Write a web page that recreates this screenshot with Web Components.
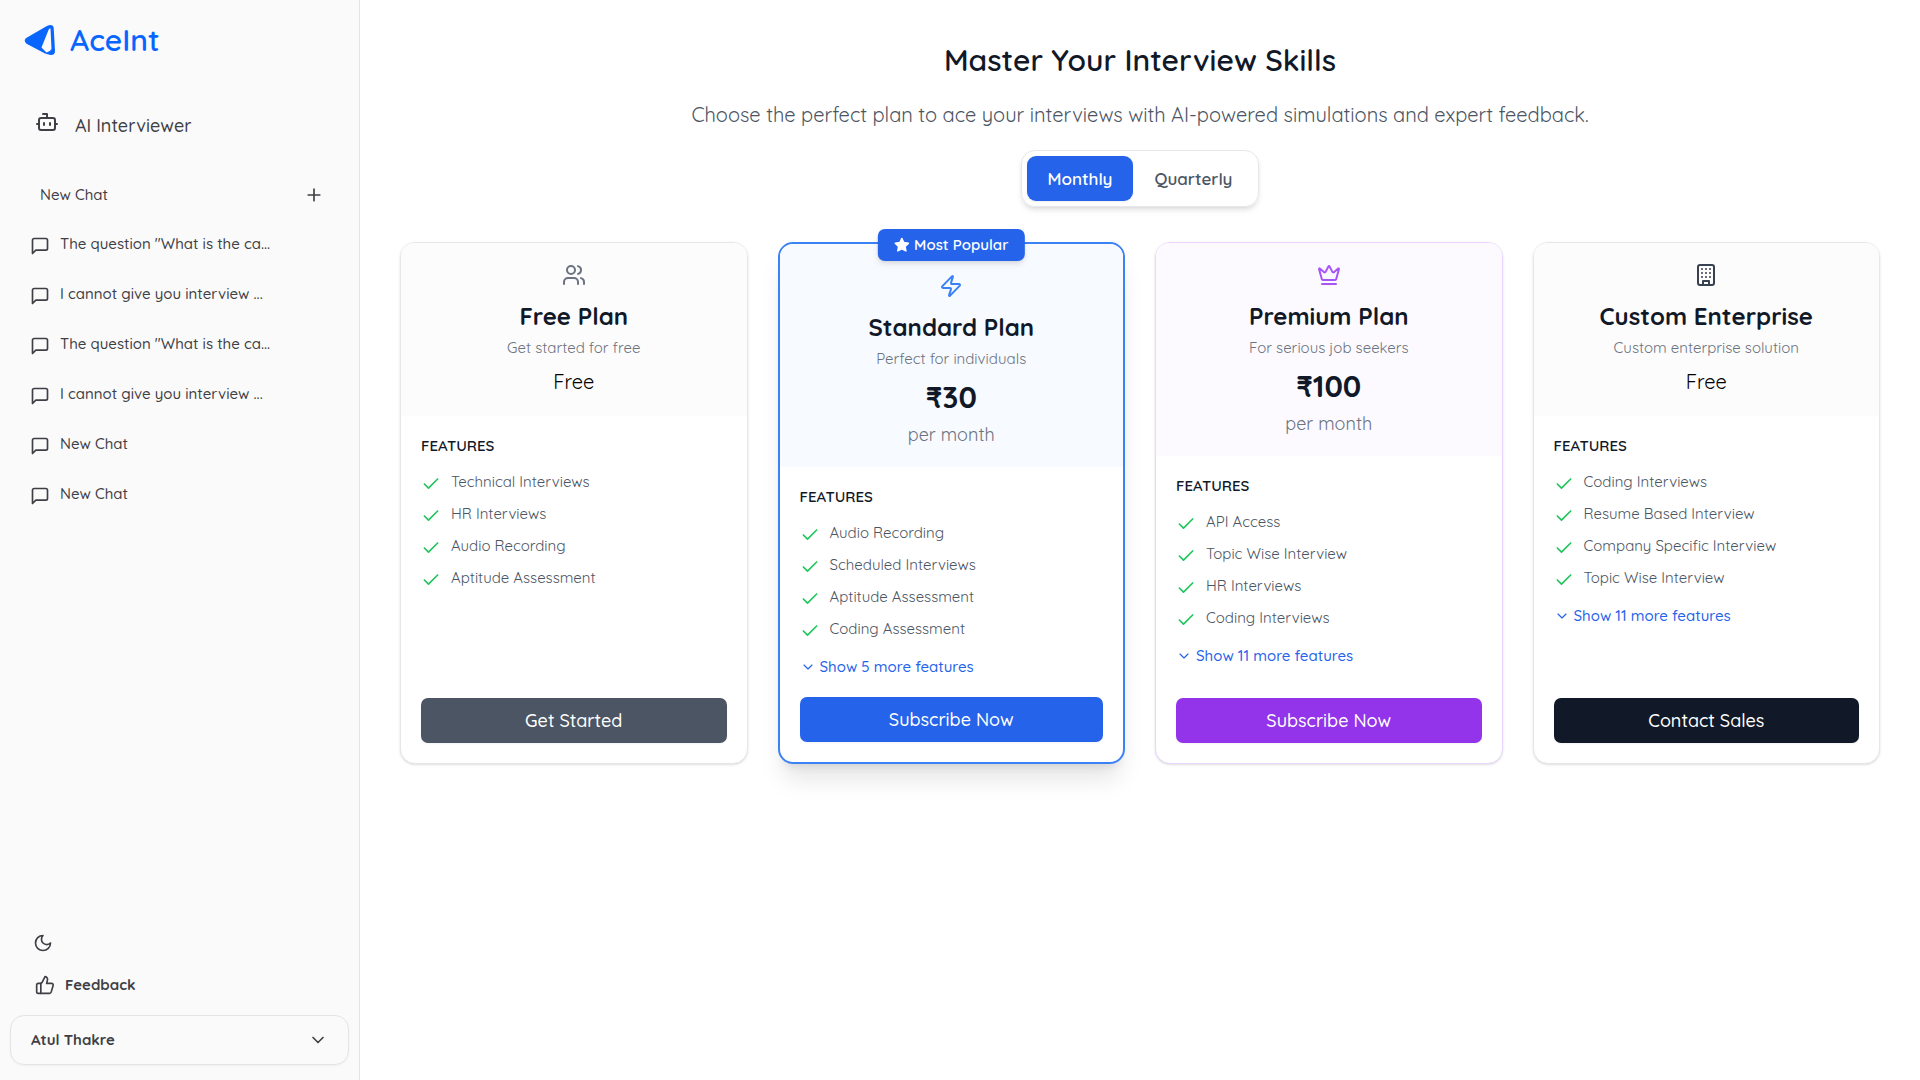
<!DOCTYPE html>
<html lang="en">
<head>
<meta charset="utf-8">
<title>AceInt – Plans</title>
<style>
  *{box-sizing:border-box}
  html,body{margin:0;min-height:100vh}
  body{font-family:Quicksand,Lato,"Open Sans",sans-serif;font-size:16px;color:#111827;background:#fff}
</style>
</head>
<body>
<ace-app>
  <ace-sidebar slot="side">
    <chat-link>The question "What is the ca...</chat-link>
    <chat-link>I cannot give you interview ...</chat-link>
    <chat-link>The question "What is the ca...</chat-link>
    <chat-link>I cannot give you interview ...</chat-link>
    <chat-link>New Chat</chat-link>
    <chat-link>New Chat</chat-link>
  </ace-sidebar>
  <page-intro>
    <span slot="title">Master Your Interview Skills</span>
    <span slot="text">Choose the perfect plan to ace your interviews with AI-powered simulations and expert feedback.</span>
  </page-intro>
  <billing-toggle></billing-toggle>
  <plan-grid>
    <plan-card icon="users" theme="free" name="Free Plan" text="Get started for free" action="Get Started"
      features="Technical Interviews|HR Interviews|Audio Recording|Aptitude Assessment"></plan-card>
    <plan-card icon="zap" theme="standard" popular name="Standard Plan" text="Perfect for individuals" price="₹30" action="Subscribe Now" more="5"
      features="Audio Recording|Scheduled Interviews|Aptitude Assessment|Coding Assessment"></plan-card>
    <plan-card icon="crown" theme="premium" name="Premium Plan" text="For serious job seekers" price="₹100" action="Subscribe Now" more="11"
      features="API Access|Topic Wise Interview|HR Interviews|Coding Interviews"></plan-card>
    <plan-card icon="building" theme="custom" name="Custom Enterprise" text="Custom enterprise solution" action="Contact Sales" more="11"
      features="Coding Interviews|Resume Based Interview|Company Specific Interview|Topic Wise Interview"></plan-card>
  </plan-grid>
</ace-app>
<script>
const BASE = '*{box-sizing:border-box}button{font-family:inherit;border:0;background:none;padding:0;cursor:pointer;color:inherit}h1,h2,h3,p,ul{margin:0;padding:0}a{color:inherit;text-decoration:none}';
const ICONS = {
  bot:'<path d="M12 8V4H8"/><rect width="16" height="12" x="4" y="8" rx="2"/><path d="M2 14h2M20 14h2M15 13v2M9 13v2"/>',
  plus:'<path d="M5 12h14M12 5v14"/>',
  chat:'<path d="M21 15a2 2 0 0 1-2 2H7l-4 4V5a2 2 0 0 1 2-2h14a2 2 0 0 1 2 2z"/>',
  moon:'<path d="M12 3a6 6 0 0 0 9 9 9 9 0 1 1-9-9Z"/>',
  thumb:'<path d="M7 10v12"/><path d="M15 5.88 14 10h5.83a2 2 0 0 1 1.92 2.56l-2.33 8A2 2 0 0 1 17.5 22H4a2 2 0 0 1-2-2v-8a2 2 0 0 1 2-2h2.76a2 2 0 0 0 1.79-1.11L12 2a3.13 3.13 0 0 1 3 3.88Z"/>',
  down:'<path d="m6 9 6 6 6-6"/>',
  check:'<path d="M20 6 9 17l-5-5"/>',
  users:'<path d="M16 21v-2a4 4 0 0 0-4-4H6a4 4 0 0 0-4 4v2"/><circle cx="9" cy="7" r="4"/><path d="M22 21v-2a4 4 0 0 0-3-3.87M16 3.13a4 4 0 0 1 0 7.75"/>',
  zap:'<path d="M4 14a1 1 0 0 1-.78-1.63l9.9-10.2a.5.5 0 0 1 .86.46l-1.92 6.02A1 1 0 0 0 13 10h7a1 1 0 0 1 .78 1.63l-9.9 10.2a.5.5 0 0 1-.86-.46l1.92-6.02A1 1 0 0 0 11 14z"/>',
  crown:'<path d="M11.562 3.266a.5.5 0 0 1 .876 0L15.39 8.87a1 1 0 0 0 1.516.294L21.183 5.5a.5.5 0 0 1 .798.519l-2.834 10.246a1 1 0 0 1-.956.734H5.81a1 1 0 0 1-.957-.734L2.02 6.02a.5.5 0 0 1 .798-.519l4.276 3.664a1 1 0 0 0 1.516-.294z"/><path d="M5 21h14"/>',
  building:'<rect width="16" height="20" x="4" y="2" rx="2"/><path d="M9 22v-4h6v4M8 6h.01M16 6h.01M12 6h.01M12 10h.01M12 14h.01M16 10h.01M16 14h.01M8 10h.01M8 14h.01"/>',
  star:'<path fill="currentColor" d="m12 2 3.09 6.26L22 9.27l-5 4.87 1.18 6.88L12 17.77l-6.18 3.25L7 14.14 2 9.27l6.91-1.01z"/>'
};
class Base extends HTMLElement {
  connectedCallback(){
    if(this.shadowRoot) return;
    this.attachShadow({mode:'open'}).innerHTML = `<style>${BASE}${this.css()}</style>${this.html()}`;
  }
  at(n){ return this.getAttribute(n) || ''; }
}
customElements.define('ui-icon', class extends Base {
  css(){ const s=this.at('size')||20; return `:host{display:inline-flex;flex:none;width:${s}px;height:${s}px}svg{width:100%;height:100%}`; }
  html(){ return `<svg viewBox="0 0 24 24" fill="none" stroke="currentColor" stroke-width="${this.at('weight')||2}" stroke-linecap="round" stroke-linejoin="round" aria-hidden="true">${ICONS[this.at('name')]}</svg>`; }
});
customElements.define('ace-app', class extends Base {
  css(){ return ':host{display:flex;min-height:100vh}main{flex:1;min-width:0;display:flex;flex-direction:column;align-items:center;padding:40px}'; }
  html(){ return '<slot name="side"></slot><main><slot></slot></main>'; }
});
customElements.define('chat-link', class extends Base {
  css(){ return ':host{display:block}a{display:flex;align-items:center;height:50px;padding:0 10px;gap:10px;font-size:15px;font-weight:500;line-height:20px;color:#3f3f46}ui-icon{margin-top:4px}'; }
  html(){ return '<a href="#"><ui-icon name="chat"></ui-icon><span><slot></slot></span></a>'; }
});
customElements.define('ace-sidebar', class extends Base {
  css(){ return `:host{display:flex;flex-direction:column;flex:none;width:360px;background:#fafafa;border-right:1px solid #e4e4e7;color:#3f3f46}
    .brand{display:flex;align-items:center;gap:14px;padding:20px 24px;height:80px;color:#0866ff;font-size:30px;line-height:40px;font-weight:600}
    .brand svg{width:32px;height:32px}
    .ai{display:flex;align-items:center;gap:16px;height:40px;margin:26px 35px 0;font-size:18px;font-weight:500;line-height:24px}
    .ai ui-icon{margin-bottom:8px}
    .new{display:flex;align-items:center;justify-content:space-between;height:40px;margin:29px 35px 0 40px;font-size:15px;font-weight:500;line-height:20px;text-align:left}
    nav{padding:4px 20px 0;flex:1}
    .moon{align-self:flex-start;display:flex;margin:0 33px 20px;}
    .feedback{display:flex;align-items:center;gap:10px;margin:0 35px 18px;height:24px;font-size:15px;line-height:20px;font-weight:700}
    .user{display:flex;align-items:center;justify-content:space-between;height:50px;margin:0 10px 15px;padding:0 20px;border:1px solid #e4e4e7;border-radius:14px;font-size:15px;line-height:20px;font-weight:700;box-shadow:0 1px 2px rgba(0,0,0,.05)}`; }
  html(){ return `<a class="brand" href="#"><svg viewBox="0 0 32 32" aria-hidden="true"><path fill="currentColor" fill-rule="evenodd" d="M26 1C28.500 1 29.600 2 29.700 4L31 27C31.100 30 29 31.500 26.500 31L21 29.500 3 20C0 18 0 15 3 13.500L22 2.500Q24 1 26 1ZM26.500 4.500Q25 4 24.500 6L17.500 23.500 22.500 28.500Q26 28 27.500 25Z"/></svg><span>AceInt</span></a>
    <a class="ai" href="#"><ui-icon name="bot" size="24"></ui-icon><span>AI Interviewer</span></a>
    <button class="new"><span>New Chat</span><ui-icon name="plus"></ui-icon></button>
    <nav><slot></slot></nav>
    <button class="moon" aria-label="Toggle theme"><ui-icon name="moon"></ui-icon></button>
    <a class="feedback" href="#"><ui-icon name="thumb"></ui-icon><span>Feedback</span></a>
    <button class="user"><span>Atul Thakre</span><ui-icon name="down"></ui-icon></button>`; }
});
customElements.define('page-intro', class extends Base {
  css(){ return ':host{display:block;text-align:center}h1{font-size:30px;font-weight:600;line-height:40px}p{margin-top:20px;font-size:20px;line-height:30px;color:#4b5563}'; }
  html(){ return '<h1><slot name="title"></slot></h1><p><slot name="text"></slot></p>'; }
});
customElements.define('billing-toggle', class extends Base {
  css(){ return ':host{display:flex;margin-top:20px;padding:5px;border:1px solid #e5e7eb;border-radius:14px;box-shadow:0 4px 6px -1px rgba(0,0,0,.1),0 2px 4px -2px rgba(0,0,0,.1)}button{height:45px;padding:0 21px;border-radius:9px;font-size:17px;line-height:24px;font-weight:600;color:#4b5563}.on{background:#2563eb;color:#fff;box-shadow:0 1px 2px rgba(0,0,0,.08)}'; }
  html(){ return '<button class="on" aria-pressed="true">Monthly</button><button aria-pressed="false">Quarterly</button>'; }
});
customElements.define('plan-grid', class extends Base {
  css(){ return ':host{display:grid;grid-template-columns:repeat(4,minmax(0,1fr));gap:30px;align-self:stretch;margin-top:35px}'; }
  html(){ return '<slot></slot>'; }
});
const THEMES = {
  free:['#6b7280','#fcfcfd','#e5e7eb','#4b5563'],
  standard:['#3b82f6','#f7faff','#3b82f6','#2563eb'],
  premium:['#a855f7','#fcfaff','#e9d5ff','#9333ea'],
  custom:['#374151','#fcfcfd','#e5e7eb','#111827']
};
customElements.define('plan-card', class extends Base {
  css(){
    const [icon,tint,line,btn]=THEMES[this.at('theme')], pop=this.hasAttribute('popular');
    return `:host{display:flex;flex-direction:column;position:relative;background:#fff;border:${pop?2:1}px solid ${line};border-radius:15px;box-shadow:${pop?'0 20px 25px -5px rgba(0,0,0,.1),0 8px 10px -6px rgba(0,0,0,.1)':'0 1px 3px rgba(0,0,0,.1),0 1px 2px -1px rgba(0,0,0,.1)'}}
    header{display:flex;flex-direction:column;align-items:center;text-align:center;padding:${pop?30:20}px 20px 20px;background:${tint};border-radius:13px 13px 0 0}
    header ui-icon{color:${icon}}
    h2{margin-top:13px;font-size:24px;line-height:32px;font-weight:700}
    .text{margin-top:6px;font-size:15px;line-height:20px;color:#6b7280}
    .free{margin-top:10px;font-size:20px;line-height:28px;color:#000}
    .price{margin-top:10px;font-size:30px;line-height:36px;font-weight:700}
    .per{margin-top:8px;font-size:18px;line-height:24px;color:#6b7280}
    .body{flex:1;display:flex;flex-direction:column;align-items:flex-start;padding:20px}
    h3{font-size:15px;line-height:20px;font-weight:600;text-transform:uppercase}
    ul{list-style:none;display:flex;flex-direction:column;gap:10px;margin-top:16px}
    li{display:flex;gap:10px;font-size:15px;line-height:20px;color:#4b5563}
    li ui-icon{margin-top:2px;color:#22c55e}
    .more{display:flex;align-items:center;gap:4px;margin-top:16px;font-size:15px;line-height:20px;font-weight:500;color:#2563eb}
    .go{height:45px;margin:0 20px 20px;border-radius:7px;background:${btn};color:#fff;font-size:18px;line-height:24px;font-weight:500;box-shadow:0 1px 2px rgba(0,0,0,.05)}
    .badge{position:absolute;top:-15px;left:50%;transform:translateX(-50%);display:flex;align-items:center;gap:4px;height:32px;padding:0 16px;border-radius:7px;background:#2563eb;color:#fff;font-size:15px;line-height:20px;font-weight:600;white-space:nowrap;box-shadow:0 4px 6px -1px rgba(0,0,0,.1),0 2px 4px -2px rgba(0,0,0,.1)}`;
  }
  html(){
    const price=this.at('price'), more=this.at('more');
    return `${this.hasAttribute('popular')?'<div class="badge"><ui-icon name="star" size="16"></ui-icon><span>Most Popular</span></div>':''}
    <header><ui-icon name="${this.at('icon')}" size="24"></ui-icon><h2>${this.at('name')}</h2><p class="text">${this.at('text')}</p>
    ${price?`<p class="price">${price}</p><p class="per">per month</p>`:'<p class="free">Free</p>'}</header>
    <div class="body"><h3>Features</h3><ul>${this.at('features').split('|').map(f=>`<li><ui-icon name="check"></ui-icon><span>${f}</span></li>`).join('')}</ul>
    ${more?`<button class="more"><ui-icon name="down" size="16" weight="1.75"></ui-icon><span>Show ${more} more features</span></button>`:''}</div>
    <button class="go">${this.at('action')}</button>`;
  }
});
</script>
</body>
</html>
